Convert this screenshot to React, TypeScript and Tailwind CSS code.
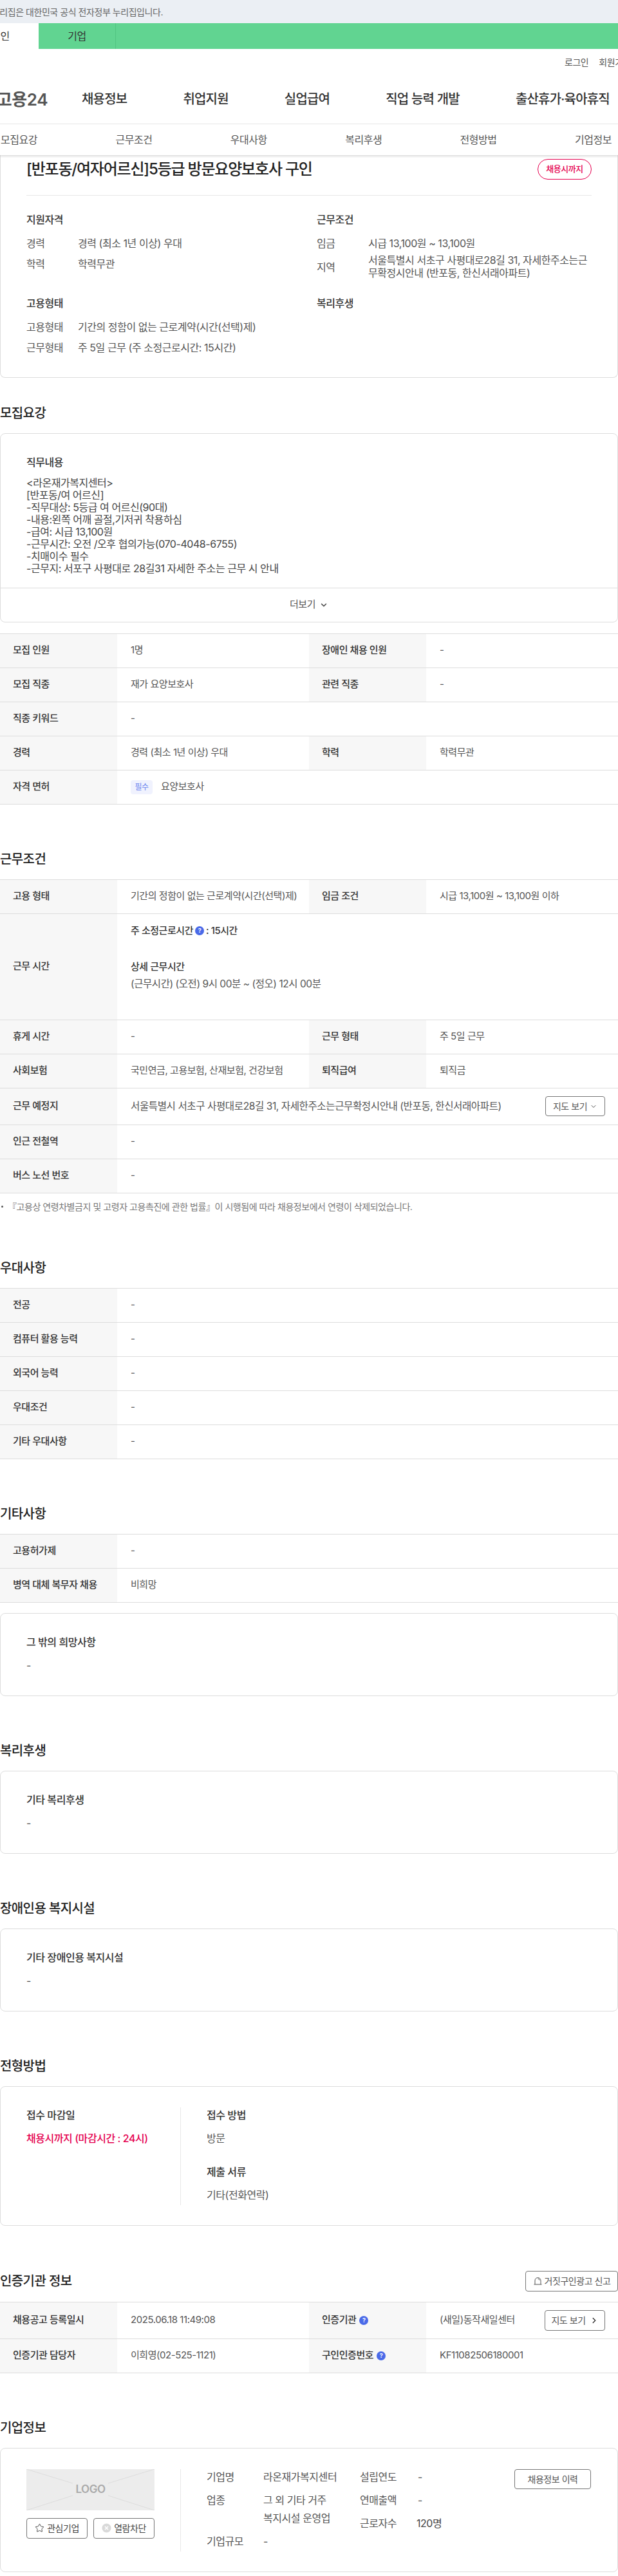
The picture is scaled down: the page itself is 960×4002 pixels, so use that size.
import { ChevronDown, ChevronRight, Star } from 'lucide-react';
import type { ReactNode } from 'react';

type Cell = { label: ReactNode; value: ReactNode };

function Help() {
  return (
    <span className="inline-flex h-[14px] w-[14px] shrink-0 items-center justify-center rounded-full bg-[#4a6ae8] text-[9px] font-bold leading-none text-white">
      ?
    </span>
  );
}

function Heading({ children }: { children: ReactNode }) {
  return <h2 className="mb-4 h-[30px] text-[20px] font-medium leading-[30px] tracking-[-0.03em] text-[#222]">{children}</h2>;
}

function Row({ cells, tall }: { cells: Cell[]; tall?: boolean }) {
  const wrap = tall ? 'h-[57px]' : 'h-[53px]';
  if (cells.length === 1) {
    return (
      <div className={`grid grid-cols-[182px_1fr] border-b border-[#ddd] ${wrap}`}>
        <div className="flex items-center bg-[#f7f7f7] pl-5 font-medium text-[#333]">{cells[0].label}</div>
        <div className="flex items-center pl-[21px] pr-5">{cells[0].value}</div>
      </div>
    );
  }
  return (
    <div className={`grid grid-cols-[182px_298px_182px_1fr] border-b border-[#ddd] ${wrap}`}>
      <div className="flex items-center bg-[#f7f7f7] pl-5 font-medium text-[#333]">{cells[0].label}</div>
      <div className="flex items-center pl-[21px]">{cells[0].value}</div>
      <div className="flex items-center gap-[5px] bg-[#f7f7f7] pl-5 font-medium text-[#333]">{cells[1].label}</div>
      <div className="flex items-center justify-between pl-[21px] pr-5">{cells[1].value}</div>
    </div>
  );
}

function TextCard({ title, body }: { title: string; body: string }) {
  return (
    <div className="mt-px rounded-[8px] border border-[#ddd] pb-[35px] pl-10 pt-8 text-[16px]">
      <div className="h-6 font-medium leading-6 text-[#333]">{title}</div>
      <div className="mt-3 h-6 leading-6">{body}</div>
    </div>
  );
}

const jobLines = [
  '<라온재가복지센터>',
  '[반포동/여 어르신]',
  '-직무대상: 5등급 여 어르신(90대)',
  '-내용:왼쪽 어깨 골절,기저귀 착용하심',
  '-급여: 시급 13,100원',
  '-근무시간: 오전 /오후 협의가능(070-4048-6755)',
  '-치매이수 필수',
  '-근무지: 서포구 사평대로 28길31 자세한 주소는 근무 시 안내',
];

const navItems = ['채용정보', '취업지원', '실업급여', '직업 능력 개발', '출산휴가·육아휴직'];
const tabs = ['모집요강', '근무조건', '우대사항', '복리후생', '전형방법', '기업정보'];

export default function App() {
  return (
    <div className="w-[960px] overflow-hidden bg-white font-['Inter','Noto_Sans_CJK_KR',sans-serif] text-[15px] tracking-[-0.03em] text-[#555]">
      {/* gov notice */}
      <div className="flex h-9 w-full items-center bg-[#ebeff4] text-[#666]">
        <div className="flex w-[253px] shrink-0 justify-end whitespace-nowrap text-[14px]">
          <span>이 누리집은 대한민국 공식 전자정부 누리집입니다.</span>
        </div>
      </div>

      <div className="flex h-10 bg-[#61d491]">
        <div className="-ml-[59px] flex w-[119px] items-center justify-center bg-white text-[16px] text-[#333]">개인</div>
        <div className="flex w-[120px] items-center justify-center border-r border-[#52c482] text-[16px] text-[#333]">기업</div>
      </div>

      <div className="flex h-10 items-center gap-[16px] pl-[877px] text-[14px] text-[#555]">
        <span className="whitespace-nowrap">로그인</span>
        <span className="whitespace-nowrap">회원가입</span>
      </div>

      <div className="flex h-[77px] items-center border-b border-[#e8e8e8]">
        <div className="flex w-[74px] shrink-0 justify-end whitespace-nowrap text-[26px] font-semibold text-[#555]">
          <span>고용24</span>
        </div>
        <nav className="ml-[53px] flex gap-[87px] whitespace-nowrap text-[20px] font-medium tracking-[-0.04em] text-[#333]">
          {navItems.map((item) => (
            <span key={item}>{item}</span>
          ))}
        </nav>
      </div>

      <div className="relative z-10 flex h-[48px] items-center bg-white text-[16px] shadow-[0_2px_3px_rgba(0,0,0,0.14)]">
        {tabs.map((t) => (
          <span key={t} className="w-[178.4px] shrink-0 whitespace-nowrap pl-px text-[#555]">
            {t}
          </span>
        ))}
      </div>

      {/* summary card */}
      <div className="rounded-b-[8px] border border-t-0 border-[#ddd] px-10 pb-[34px] text-[16px]">
        <div className="flex items-center justify-between border-b border-[#e8e8e8] pb-6 pt-[6px]">
          <h1 className="text-[24px] font-medium leading-[32px] tracking-[-0.05em] text-[#222]">[반포동/여자어르신]5등급 방문요양보호사 구인</h1>
          <span className="flex h-8 w-[84px] items-center justify-center rounded-full border border-[#e5004f] text-[13px] font-medium text-[#e5004f]">
            채용시까지
          </span>
        </div>
        <div className="grid grid-cols-2 gap-x-6 gap-y-[25px] pt-[25px]">
          <div>
            <h3 className="h-6 font-medium leading-6 text-[#333]">지원자격</h3>
            <dl className="mt-[13px] flex flex-col gap-[7.5px] leading-6">
              <div className="flex">
                <dt className="w-20">경력</dt>
                <dd>경력 (최소 1년 이상) 우대</dd>
              </div>
              <div className="flex">
                <dt className="w-20">학력</dt>
                <dd>학력무관</dd>
              </div>
            </dl>
          </div>
          <div>
            <h3 className="h-6 font-medium leading-6 text-[#333]">근무조건</h3>
            <dl className="mt-[13px] flex flex-col gap-[5px] leading-6">
              <div className="flex">
                <dt className="w-20">임금</dt>
                <dd>시급 13,100원 ~ 13,100원</dd>
              </div>
              <div className="flex items-center">
                <dt className="w-20">지역</dt>
                <dd className="w-[347px] break-all leading-[19.5px]">
                  서울특별시 서초구 사평대로28길 31, 자세한주소는근무확정시안내 (반포동, 한신서래아파트)
                </dd>
              </div>
            </dl>
          </div>
          <div>
            <h3 className="h-6 font-medium leading-6 text-[#333]">고용형태</h3>
            <dl className="mt-[13px] flex flex-col gap-[7.5px] leading-6">
              <div className="flex">
                <dt className="w-20">고용형태</dt>
                <dd>기간의 정함이 없는 근로계약(시간(선택)제)</dd>
              </div>
              <div className="flex">
                <dt className="w-20">근무형태</dt>
                <dd>주 5일 근무 (주 소정근로시간: 15시간)</dd>
              </div>
            </dl>
          </div>
          <div>
            <h3 className="h-6 font-medium leading-6 text-[#333]">복리후생</h3>
          </div>
        </div>
      </div>

      {/* 모집요강 */}
      <section className="mt-10">
        <Heading>모집요강</Heading>
        <div className="mt-px rounded-[8px] border border-[#ddd]">
          <div className="px-10 pb-5 pt-8 text-[16px]">
            <div className="h-6 font-medium leading-6 text-[#333]">직무내용</div>
            <div className="mt-[11px] text-[#444]">
              {jobLines.map((line) => (
                <div key={line} className="h-[19px] leading-[19px]">
                  {line}
                </div>
              ))}
            </div>
          </div>
          <div className="flex h-[53px] items-center justify-center gap-[6px] border-t border-[#ddd]">
            더보기
            <ChevronDown size={14} strokeWidth={2.5} className="text-[#444]" />
          </div>
        </div>
        <div className="mt-[17px] border-t border-[#ddd]">
          <Row cells={[{ label: '모집 인원', value: '1명' }, { label: '장애인 채용 인원', value: '-' }]} />
          <Row cells={[{ label: '모집 직종', value: '재가 요양보호사' }, { label: '관련 직종', value: '-' }]} />
          <Row cells={[{ label: '직종 키워드', value: '-' }]} />
          <Row cells={[{ label: '경력', value: '경력 (최소 1년 이상) 우대' }, { label: '학력', value: '학력무관' }]} />
          <Row
            cells={[
              {
                label: '자격 면허',
                value: (
                  <>
                    <span className="mr-[13px] flex h-[22px] w-[34px] items-center justify-center rounded-[4px] bg-[#f0f2fe] text-[12px] text-[#6b84ee]">
                      필수
                    </span>
                    요양보호사
                  </>
                ),
              },
            ]}
          />
        </div>
      </section>

      {/* 근무조건 */}
      <section className="mt-[70px]">
        <Heading>근무조건</Heading>
        <div className="border-t border-[#ddd]">
          <Row
            cells={[
              { label: '고용 형태', value: '기간의 정함이 없는 근로계약(시간(선택)제)' },
              { label: '임금 조건', value: '시급 13,100원 ~ 13,100원 이하' },
            ]}
          />
          <div className="grid h-[165px] grid-cols-[182px_1fr] border-b border-[#ddd]">
            <div className="flex items-center bg-[#f7f7f7] pl-5 font-medium text-[#333]">근무 시간</div>
            <div className="pl-[21px] pt-[14px] leading-6">
              <div className="flex items-center gap-[3px] font-medium text-[#333]">
                주 소정근로시간 <Help />: 15시간
              </div>
              <div className="mt-8 font-medium text-[#333]">상세 근무시간</div>
              <div className="mt-[3px] text-[15.5px]">(근무시간) (오전) 9시 00분 ~ (정오) 12시 00분</div>
            </div>
          </div>
          <Row cells={[{ label: '휴게 시간', value: '-' }, { label: '근무 형태', value: '주 5일 근무' }]} />
          <Row
            cells={[
              { label: '사회보험', value: '국민연금, 고용보험, 산재보험, 건강보험' },
              { label: '퇴직급여', value: '퇴직금' },
            ]}
          />
          <div className="grid h-[57px] grid-cols-[182px_1fr] border-b border-[#ddd]">
            <div className="flex items-center bg-[#f7f7f7] pl-5 font-medium text-[#333]">근무 예정지</div>
            <div className="flex items-center justify-between pl-[21px] pr-5">
              <span className="text-[15.6px]">서울특별시 서초구 사평대로28길 31, 자세한주소는근무확정시안내 (반포동, 한신서래아파트)</span>
              <button className="flex h-[31px] w-[93px] items-center justify-center gap-1 rounded-[4px] border border-[#777] text-[14px]">
                지도 보기
                <ChevronDown size={12} strokeWidth={2} />
              </button>
            </div>
          </div>
          <Row cells={[{ label: '인근 전철역', value: '-' }]} />
          <Row cells={[{ label: '버스 노선 번호', value: '-' }]} />
        </div>
        <div className="mt-[10px] flex h-[21px] items-center whitespace-nowrap text-[14px] text-[#777]">
          <span className="ml-[2px] mr-[7px] h-[3px] w-[3px] rounded-full bg-[#555]" />
          『고용상 연령차별금지 및 고령자 고용촉진에 관한 법률』이 시행됨에 따라 채용정보에서 연령이 삭제되었습니다.
        </div>
      </section>

      {/* 우대사항 */}
      <section className="mt-[70px]">
        <Heading>우대사항</Heading>
        <div className="border-t border-[#ddd]">
          {['전공', '컴퓨터 활용 능력', '외국어 능력', '우대조건', '기타 우대사항'].map((label) => (
            <Row key={label} cells={[{ label, value: '-' }]} />
          ))}
        </div>
      </section>

      {/* 기타사항 */}
      <section className="mt-[70px]">
        <Heading>기타사항</Heading>
        <div className="border-t border-[#ddd]">
          <Row cells={[{ label: '고용허가제', value: '-' }]} />
          <Row cells={[{ label: '병역 대체 복무자 채용', value: '비희망' }]} />
        </div>
        <div className="mt-4">
          <TextCard title="그 밖의 희망사항" body="-" />
        </div>
      </section>

      <section className="mt-[70px]">
        <Heading>복리후생</Heading>
        <TextCard title="기타 복리후생" body="-" />
      </section>

      <section className="mt-[70px]">
        <Heading>장애인용 복지시설</Heading>
        <TextCard title="기타 장애인용 복지시설" body="-" />
      </section>

      {/* 전형방법 */}
      <section className="mt-[70px]">
        <Heading>전형방법</Heading>
        <div className="mt-px rounded-[8px] border border-[#ddd] px-10 pb-[31px] pt-8 text-[16px]">
          <div className="flex h-[152px] leading-6">
            <div className="w-[240px] shrink-0 border-r border-[#e8e8e8]">
              <div className="font-medium text-[#333]">접수 마감일</div>
              <div className="mt-3 font-medium text-[#e5004f]">채용시까지 (마감시간 : 24시)</div>
            </div>
            <div className="pl-10">
              <div className="font-medium text-[#333]">접수 방법</div>
              <div className="mt-3">방문</div>
              <div className="mt-7 font-medium text-[#333]">제출 서류</div>
              <div className="mt-3">기타(전화연락)</div>
            </div>
          </div>
        </div>
      </section>

      {/* 인증기관 정보 */}
      <section className="mt-[70px]">
        <div className="mb-4 flex h-8 items-center justify-between">
          <h2 className="text-[20px] font-medium tracking-[-0.03em] text-[#222]">인증기관 정보</h2>
          <button className="flex h-8 w-[144px] items-center justify-center gap-[3px] rounded-[4px] border border-[#777] text-[14px]">
            <svg width="15" height="15" viewBox="0 0 15 15" fill="none" stroke="#555" strokeWidth="1">
              <path d="M3 13V7a4.5 4.5 0 0 1 9 0v6M1.5 13h12" />
              <path d="M7.5 4a2.5 2.5 0 0 1 2.5 2.5" />
            </svg>
            거짓구인광고 신고
          </button>
        </div>
        <div className="border-t border-[#ddd]">
          <Row
            tall
            cells={[
              { label: '채용공고 등록일시', value: '2025.06.18 11:49:08' },
              {
                label: (
                  <>
                    인증기관 <Help />
                  </>
                ),
                value: (
                  <>
                    (새일)동작새일센터
                    <button className="flex h-8 w-[94px] items-center justify-center gap-[6px] rounded-[4px] border border-[#777] text-[14px]">
                      지도 보기
                      <ChevronRight size={14} strokeWidth={2.5} className="text-[#333]" />
                    </button>
                  </>
                ),
              },
            ]}
          />
          <Row
            cells={[
              { label: '인증기관 담당자', value: '이희영(02-525-1121)' },
              {
                label: (
                  <>
                    구인인증번호 <Help />
                  </>
                ),
                value: 'KF11082506180001',
              },
            ]}
          />
        </div>
      </section>

      {/* 기업정보 */}
      <section className="mt-[70px]">
        <Heading>기업정보</Heading>
        <div className="mt-px rounded-[8px] border border-[#ddd] px-10 pb-[31px] pt-8 text-[16px]">
          <div className="flex h-[128px]">
            <div className="w-[240px] shrink-0 border-r border-[#e8e8e8] pr-10">
              <div className="relative flex h-16 w-[199px] items-center justify-center bg-[#ececec]">
                <svg className="absolute inset-0" width="199" height="64" fill="none" stroke="#dcdcdc" strokeWidth="1">
                  <path d="M0 0 72 22M199 0 127 22M0 64 72 41M199 64 127 41" />
                </svg>
                <span className="relative text-[17px] font-semibold text-[#aaa]">LOGO</span>
              </div>
              <div className="mt-3 flex w-[199px] justify-between">
                <button className="flex h-8 w-[95px] items-center justify-center gap-1 rounded-[4px] border border-[#777] text-[14px] text-[#444]">
                  <Star size={15} strokeWidth={1.5} />
                  관심기업
                </button>
                <button className="flex h-8 w-[95px] items-center justify-center gap-1 rounded-[4px] border border-[#777] text-[14px] text-[#444]">
                  <svg width="15" height="15" viewBox="0 0 15 15">
                    <circle cx="7.5" cy="7.5" r="7" fill="#d9d9d9" />
                    <path d="M5 5l5 5M10 5l-5 5" stroke="#fff" strokeWidth="1.5" />
                  </svg>
                  열람차단
                </button>
              </div>
            </div>
            <div className="flex flex-1 pl-10">
              <dl className="flex w-[238px] shrink-0 flex-col gap-[10px] leading-6">
                <div className="flex">
                  <dt className="w-[88px] shrink-0">기업명</dt>
                  <dd>라온재가복지센터</dd>
                </div>
                <div className="flex">
                  <dt className="w-[88px] shrink-0 leading-7">업종</dt>
                  <dd className="w-[130px] break-keep leading-7">그 외 기타 거주 복지시설 운영업</dd>
                </div>
                <div className="flex">
                  <dt className="w-[88px] shrink-0">기업규모</dt>
                  <dd>-</dd>
                </div>
              </dl>
              <dl className="flex w-[240px] shrink-0 flex-col gap-3 leading-6">
                <div className="flex">
                  <dt className="w-[90px] shrink-0">설립연도</dt>
                  <dd>-</dd>
                </div>
                <div className="flex">
                  <dt className="w-[90px] shrink-0">연매출액</dt>
                  <dd>-</dd>
                </div>
                <div className="flex">
                  <dt className="w-[88px] shrink-0">근로자수</dt>
                  <dd className="text-[#444]">120명</dd>
                </div>
              </dl>
              <button className="h-[31px] w-[119px] rounded-[4px] border border-[#777] text-[14px]">채용정보 이력</button>
            </div>
          </div>
        </div>
      </section>
    </div>
  );
}
